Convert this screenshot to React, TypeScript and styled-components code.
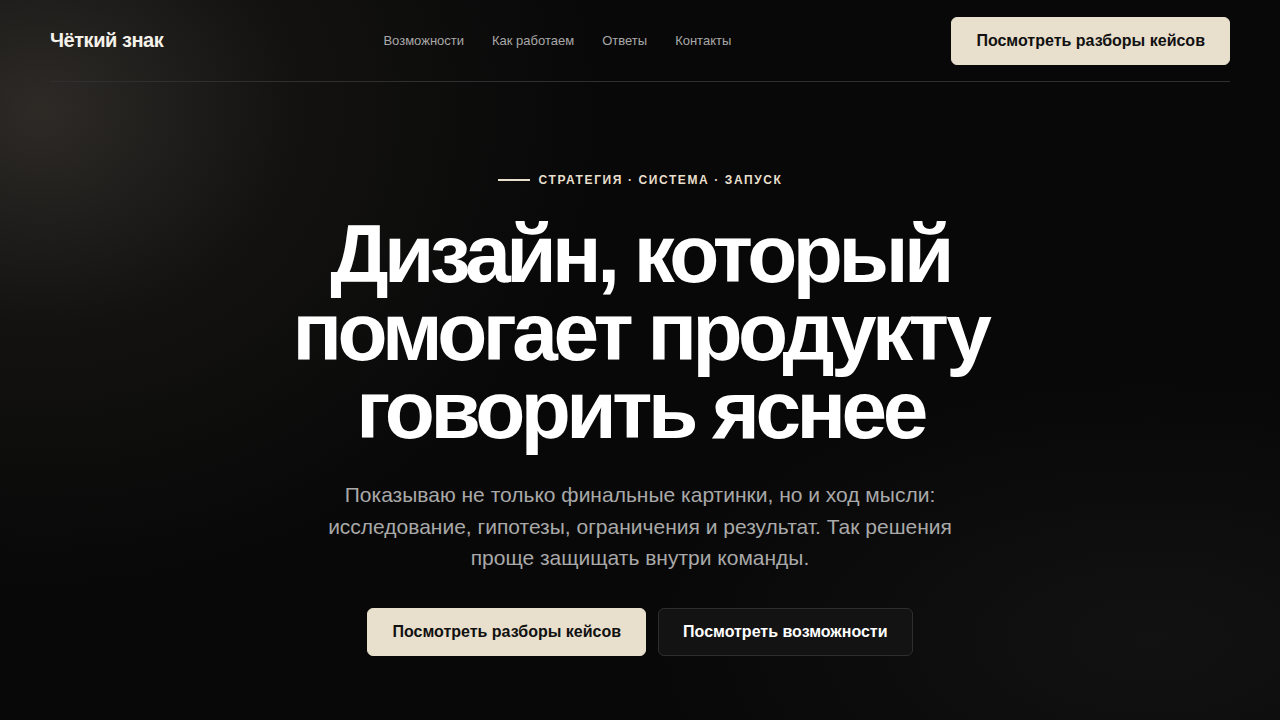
import React from "react";
import styled, { createGlobalStyle } from "styled-components";

const Global = createGlobalStyle`
  html, body { margin: 0; padding: 0; background: #080808; }
  body { font-family: "Liberation Sans", Arial, sans-serif; -webkit-font-smoothing: antialiased; }
  * { box-sizing: border-box; }
`;

const Page = styled.div`
  width: 1280px;
  height: 720px;
  overflow: hidden;
  background:
    radial-gradient(ellipse 560px 480px at 40px 110px, rgba(52, 49, 44, 0.85) 0%, rgba(30, 28, 26, 0.5) 45%, rgba(10, 10, 10, 0) 100%),
    radial-gradient(ellipse 500px 260px at 1150px 640px, rgba(28, 28, 28, 0.5) 0%, rgba(10, 10, 10, 0) 100%),
    #080808;
  color: #fff;
`;

const Header = styled.header`
  margin: 0 50px;
  height: 82px;
  display: flex;
  justify-content: space-between;
  align-items: center;
  border-bottom: 1px solid #2f2f2f;
`;

const Logo = styled.div`
  font-size: 20px;
  font-weight: 700;
  letter-spacing: -0.45px;
  color: #f4f1ea;
`;

const Nav = styled.nav`
  display: flex;
  gap: 28px;
  font-size: 13px;
  color: #a8a8a8;
`;

const NavLink = styled.a`
  color: inherit;
  text-decoration: none;
`;

const Button = styled.a<{ $variant?: "primary" | "ghost" }>`
  display: inline-flex;
  align-items: center;
  justify-content: center;
  height: 48px;
  padding: 0 24px;
  border-radius: 6px;
  font-size: 16px;
  font-weight: 700;
  text-decoration: none;
  background: ${(p) => (p.$variant === "ghost" ? "#131313" : "#e8dfcc")};
  color: ${(p) => (p.$variant === "ghost" ? "#ffffff" : "#111111")};
  border: 1px solid ${(p) => (p.$variant === "ghost" ? "#2e2e2e" : "#e8dfcc")};
`;

const HeaderAction = styled.div`
  margin-top: 1px;
`;

const Hero = styled.section`
  display: flex;
  flex-direction: column;
  align-items: center;
  text-align: center;
  padding-top: 91px;
`;

const Eyebrow = styled.div`
  display: flex;
  align-items: center;
  gap: 9px;
  font-size: 12px;
  font-weight: 700;
  letter-spacing: 1.6px;
  color: #e8dfcc;
`;

const EyebrowLine = styled.span`
  width: 32px;
  height: 2px;
  background: #e8dfcc;
`;

const Title = styled.h1`
  margin: 28px 0 0;
  font-size: 82px;
  line-height: 78px;
  font-weight: 700;
  letter-spacing: -0.055em;
  color: #ffffff;
  max-width: 760px;
`;

const Lead = styled.p`
  margin: 30px 0 0;
  font-size: 21px;
  line-height: 31.5px;
  color: #a9a9a9;
  max-width: 660px;
`;

const Actions = styled.div`
  display: flex;
  gap: 12px;
  margin-top: 34px;
`;

export default function App() {
  return (
    <Page>
      <Global />
      <Header>
        <Logo>Чёткий знак</Logo>
        <Nav>
          <NavLink href="#">Возможности</NavLink>
          <NavLink href="#">Как работаем</NavLink>
          <NavLink href="#">Ответы</NavLink>
          <NavLink href="#">Контакты</NavLink>
        </Nav>
        <HeaderAction>
          <Button>Посмотреть разборы кейсов</Button>
        </HeaderAction>
      </Header>
      <Hero>
        <Eyebrow>
          <EyebrowLine />
          СТРАТЕГИЯ · СИСТЕМА · ЗАПУСК
        </Eyebrow>
        <Title>
          Дизайн, который
          <br />
          помогает продукту
          <br />
          говорить яснее
        </Title>
        <Lead>
          Показываю не только финальные картинки, но и ход мысли: исследование, гипотезы, ограничения и результат. Так решения проще защищать внутри команды.
        </Lead>
        <Actions>
          <Button>Посмотреть разборы кейсов</Button>
          <Button $variant="ghost">Посмотреть возможности</Button>
        </Actions>
      </Hero>
    </Page>
  );
}
